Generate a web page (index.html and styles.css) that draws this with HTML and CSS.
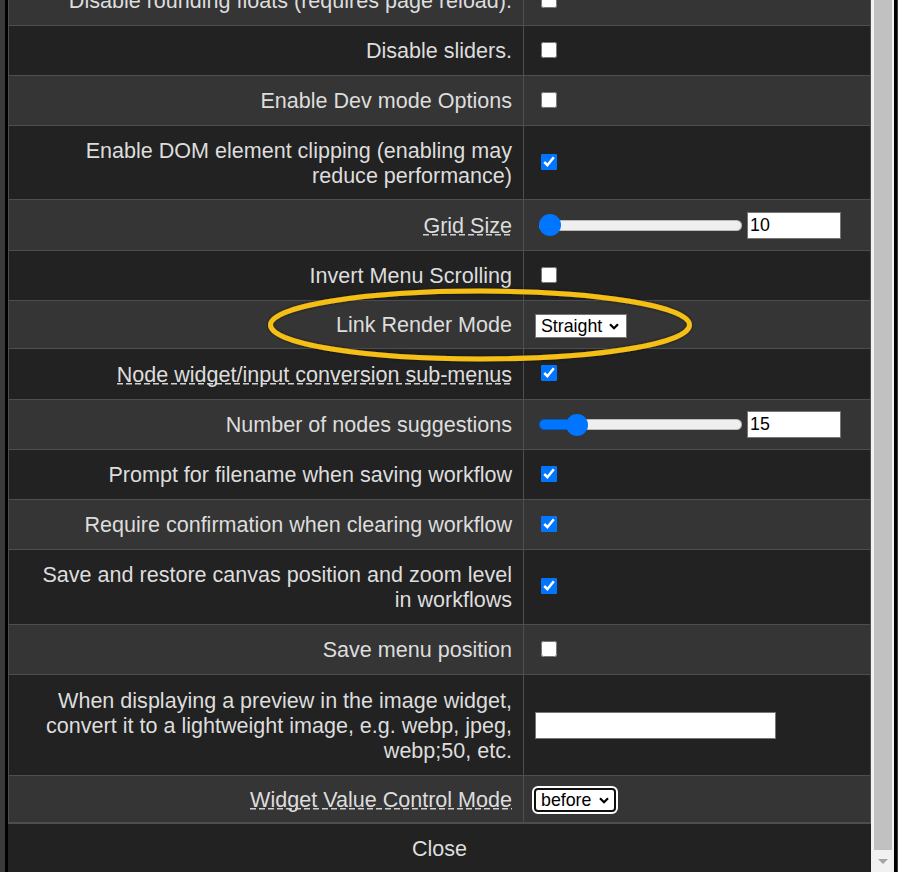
FILE: index.html
```html
<!DOCTYPE html>
<html lang="en">
<head>
<meta charset="utf-8">
<title>Settings</title>
<link rel="stylesheet" href="styles.css">
</head>
<body>
<div class="dialog">
  <div class="content">
    <table class="settings">
      <colgroup><col class="c-label"><col class="c-value"></colgroup>
      <tbody>
        <tr><td class="label">Disable rounding floats (requires page reload).</td><td class="value"><input type="checkbox" class="chk"></td></tr>
        <tr><td class="label">Disable sliders.</td><td class="value"><input type="checkbox" class="chk"></td></tr>
        <tr><td class="label">Enable Dev mode Options</td><td class="value"><input type="checkbox" class="chk"></td></tr>
        <tr class="snug"><td class="label">Enable DOM element clipping (enabling may reduce performance)</td><td class="value"><input type="checkbox" class="chk" checked></td></tr>
        <tr class="tall"><td class="label"><span class="hint">Grid Size</span></td><td class="value"><div class="range-row"><input type="range" class="slider" min="10" max="32" value="10" style="--fill: 0%"><input type="number" class="num" value="10"></div></td></tr>
        <tr><td class="label">Invert Menu Scrolling</td><td class="value"><input type="checkbox" class="chk"></td></tr>
        <tr class="compact"><td class="label">Link Render Mode</td><td class="value"><span class="select-wrap"><select class="sel sel-link"><option>Straight</option></select><svg class="chev" width="10" height="7" viewBox="0 0 10 7"><path d="M1 1.3 L5 5.3 L9 1.3" fill="none" stroke="#000" stroke-width="2.2"/></svg></span></td></tr>
        <tr class="tall"><td class="label"><span class="hint">Node widget/input conversion sub-menus</span></td><td class="value"><input type="checkbox" class="chk" checked></td></tr>
        <tr><td class="label">Number of nodes suggestions</td><td class="value"><div class="range-row"><input type="range" class="slider" min="0" max="100" value="15" style="--fill: 17%"><input type="number" class="num" value="15"></div></td></tr>
        <tr><td class="label">Prompt for filename when saving workflow</td><td class="value"><input type="checkbox" class="chk" checked></td></tr>
        <tr><td class="label">Require confirmation when clearing workflow</td><td class="value"><input type="checkbox" class="chk" checked></td></tr>
        <tr><td class="label">Save and restore canvas position and zoom level in workflows</td><td class="value"><input type="checkbox" class="chk" checked></td></tr>
        <tr><td class="label">Save menu position</td><td class="value"><input type="checkbox" class="chk"></td></tr>
        <tr class="tall"><td class="label">When displaying a preview in the image widget, convert it to a lightweight image, e.g. webp, jpeg, webp;50, etc.</td><td class="value"><input type="text" class="txt" value=""></td></tr>
        <tr class="compact last"><td class="label"><span class="hint">Widget Value Control Mode</span></td><td class="value"><span class="select-wrap"><select class="sel sel-focus"><option>before</option></select><svg class="chev chev-focus" width="10" height="7" viewBox="0 0 10 7"><path d="M1 1.3 L5 5.3 L9 1.3" fill="none" stroke="#000" stroke-width="2.2"/></svg></span></td></tr>
      </tbody>
    </table>
    <button class="close" type="button">Close</button>
  </div>
  <div class="scrollbar">
    <div class="thumb"></div>
    <div class="arrow"><svg width="10" height="5" viewBox="0 0 10 5"><polygon points="0,0 10,0 5,5" fill="#a3a3a3"/></svg></div>
  </div>
  <svg class="highlight" viewBox="0 0 430 84" preserveAspectRatio="none">
    <defs><filter id="sh" filterUnits="userSpaceOnUse" x="0" y="0" width="430" height="84"><feDropShadow dx="0" dy="0" stdDeviation="1.5" flood-color="#000" flood-opacity="0.6"/></filter></defs>
    <ellipse cx="215" cy="42" rx="209.5" ry="34" fill="none" stroke="#f6bf16" stroke-width="5" filter="url(#sh)"/>
  </svg>
</div>
</body>
</html>
```
FILE: styles.css
```css
html, body {
  margin: 0;
  height: 872px;
  overflow: hidden;
  background: #3a3a3a;
}

body {
  font-family: "Liberation Sans", Arial, sans-serif;
  color: #ddd;
}

.dialog {
  position: relative;
  display: flex;
  margin-left: 5px;
  width: 886px;
  height: 872px;
  border-left: 3px solid #000;
  border-right: 3px solid #000;
  background: #222;
  overflow: hidden;
}

.content {
  flex: 1;
  min-width: 0;
  overflow: hidden;
  display: flex;
  flex-direction: column;
}

.settings {
  width: 100%;
  table-layout: fixed;
  border-collapse: collapse;
  margin-top: -25px;
  font-size: 21.55px;
  line-height: 25px;
}

.c-label { width: 515px; }

.settings td {
  border: 1px solid #4e4e4e;
  vertical-align: middle;
}

.settings tr:nth-child(odd) { background: #353535; }
.settings tr:nth-child(even) { background: #222; }

.label {
  text-align: right;
  padding: 12px 11px 12px 20px;
}

.compact .label {
  padding-top: 11px;
  padding-bottom: 11px;
}

.compact.last .label {
  padding-top: 10.5px;
  padding-bottom: 10.5px;
}

.snug .label {
  padding-top: 11.5px;
  padding-bottom: 11.5px;
}

.tall .label {
  padding-top: 12.5px;
  padding-bottom: 12.5px;
}

.value {
  padding: 0 11px;
}

.hint {
  background-image: repeating-linear-gradient(to right, #d0d0d0 0 6px, transparent 6px 9px);
  background-repeat: no-repeat;
  background-size: 100% 1.5px;
  background-position: 0 calc(100% - 2px);
}

.chk {
  display: block;
  width: 16px;
  height: 16px;
  margin: -2px 0 0 6px;
}

.range-row {
  display: flex;
  align-items: center;
  gap: 5px;
}

.slider {
  -webkit-appearance: none;
  appearance: none;
  width: 203px;
  height: 22px;
  margin: 0 0 0 4px;
  background: transparent;
}

.slider::-webkit-slider-runnable-track {
  height: 11px;
  border-radius: 6px;
  background: linear-gradient(to right, #0075ff var(--fill), #efefef var(--fill));
  box-shadow: inset 0 0 0 1px rgba(0, 0, 0, 0.22);
}

.slider::-webkit-slider-thumb {
  -webkit-appearance: none;
  appearance: none;
  width: 22px;
  height: 22px;
  border-radius: 50%;
  border: none;
  background: #0075ff;
  margin-top: -5.5px;
}

.num, .txt {
  box-sizing: border-box;
  height: 27px;
  border: 1px solid #767676;
  background: #fff;
  color: #000;
  font-family: "Liberation Sans", Arial, sans-serif;
  font-size: 17.8px;
  padding: 0 2px;
  margin: 0;
}

.num {
  width: 94px;
  -moz-appearance: textfield;
}

.num::-webkit-inner-spin-button,
.num::-webkit-outer-spin-button {
  -webkit-appearance: none;
  margin: 0;
}

.txt { width: 241px; }

.select-wrap {
  position: relative;
  display: inline-block;
  vertical-align: middle;
}

.sel {
  -webkit-appearance: none;
  appearance: none;
  box-sizing: border-box;
  display: block;
  height: 24px;
  background: #fff;
  color: #000;
  font-family: "Liberation Sans", Arial, sans-serif;
  font-size: 17.8px;
  line-height: 20px;
  margin: 0;
}

.sel-link {
  width: 92px;
  border: 1px solid #767676;
  border-radius: 0;
  padding: 0 0 0 5px;
}

.sel-focus {
  width: 82px;
  margin-left: -1px;
  border: 2px solid #101010;
  border-radius: 4px;
  outline: 2px solid #fff;
  padding: 0 0 0 5px;
}

.chev {
  position: absolute;
  right: 8px;
  top: 9px;
  pointer-events: none;
}

.chev-focus {
  right: 7px;
}

.close {
  display: block;
  width: 100%;
  height: 52px;
  flex: none;
  margin: 0;
  padding: 0 0 2px;
  border: none;
  border-top: 1px solid #4e4e4e;
  background: #222;
  color: #ddd;
  font-family: "Liberation Sans", Arial, sans-serif;
  font-size: 21.55px;
  text-align: center;
}

.scrollbar {
  width: 23px;
  flex: none;
  display: flex;
  flex-direction: column;
  background: #f1f1f1;
}

.thumb {
  flex: 1;
  margin: 0 2px 0 3px;
  background: #c1c1c1;
}

.arrow {
  height: 22px;
  display: flex;
  align-items: center;
  justify-content: center;
}

.highlight {
  position: absolute;
  display: block;
  left: 257px;
  top: 283px;
  width: 430px;
  height: 84px;
  pointer-events: none;
}
```
